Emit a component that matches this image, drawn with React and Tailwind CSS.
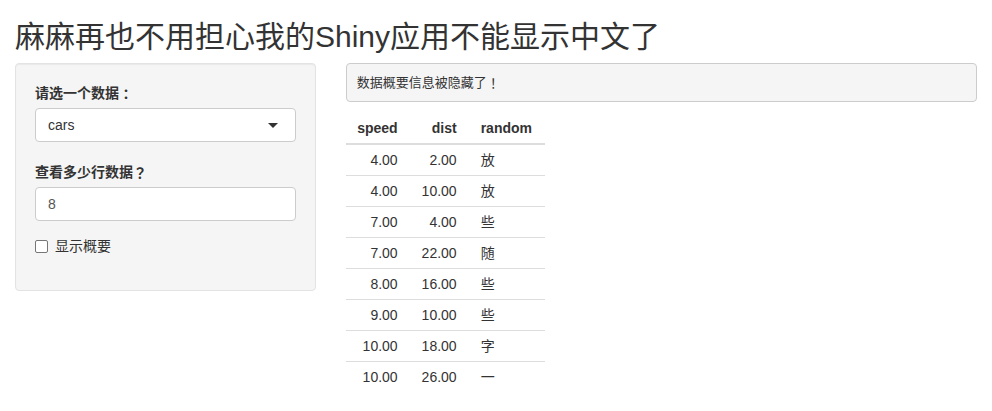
import React from "react";

const rows = [
  ["4.00", "2.00", "放"],
  ["4.00", "10.00", "放"],
  ["7.00", "4.00", "些"],
  ["7.00", "22.00", "随"],
  ["8.00", "16.00", "些"],
  ["9.00", "10.00", "些"],
  ["10.00", "18.00", "字"],
  ["10.00", "26.00", "一"],
];

const punct = { fontFamily: '"Noto Sans CJK JP", sans-serif' };

export default function App() {
  return (
    <div
      lang="zh-CN"
      className="w-[992px] h-[411px] bg-white text-[#333] px-[15px] overflow-hidden"
      style={{ fontFamily: '"Liberation Sans", "Noto Sans CJK SC", sans-serif' }}
    >
      <h2 className="mt-[20px] mb-[10px] text-[30px] leading-[33px] h-[33px] font-normal">
        麻麻再也不用担心我的Shiny应用不能显示中文了
      </h2>
      <div className="flex">
        <div className="w-[300.67px] shrink-0">
          <div className="bg-[#f5f5f5] border border-[#e3e3e3] rounded-[4px] p-[19px] shadow-[inset_0_1px_1px_rgba(0,0,0,0.05)]">
            <div className="mb-[20px]">
              <div className="text-[14px] leading-[20px] h-[20px] font-bold mb-[5px] flex items-center">
                <span>请选一个数据</span><span style={punct}>：</span>
              </div>
              <div className="h-[34px] bg-white border border-[#ccc] rounded-[4px] flex items-center justify-between pl-[12px] pr-[17px] text-[14px]">
                <span>cars</span>
                <span className="w-0 h-0 border-l-[5px] border-r-[5px] border-t-[5px] border-l-transparent border-r-transparent border-t-[#333]"></span>
              </div>
            </div>
            <div className="mb-[15px]">
              <div className="text-[14px] leading-[20px] h-[20px] font-bold mb-[5px] flex items-center">
                <span>查看多少行数据</span><span style={punct}>？</span>
              </div>
              <div className="h-[34px] bg-white border border-[#ccc] rounded-[4px] flex items-center pl-[12px] text-[14px] text-[#555]">
                8
              </div>
            </div>
            <div className="flex items-center h-[20px] mb-[15px] text-[14px]">
              <span className="w-[13px] h-[13px] border border-[#767676] rounded-[2px] bg-white mr-[7px]"></span>
              <span>显示概要</span>
            </div>
          </div>
        </div>
        <div className="ml-[30px] flex-1">
          <div className="h-[39px] bg-[#f5f5f5] border border-[#ccc] rounded-[4px] px-[10px] flex items-center text-[13px] text-[#333]">
            <span>数据概要信息被隐藏了</span><span style={punct}>！</span>
          </div>
          <table className="mt-[10px] text-[14px] leading-[20px] border-collapse">
            <thead>
              <tr className="border-b-2 border-[#ddd]">
                <th className="w-[60px] pt-[6px] pb-[5px] align-bottom text-right pr-[8px] font-bold">speed</th>
                <th className="w-[59px] pt-[6px] pb-[5px] align-bottom text-right pr-[8px] font-bold">dist</th>
                <th className="w-[80px] pt-[6px] pb-[5px] align-bottom text-left pl-[16px] font-bold">random</th>
              </tr>
            </thead>
            <tbody>
              {rows.map((r, i) => (
                <tr key={i} className={i === 0 ? "" : "border-t border-[#ddd]"}>
                  <td className="py-[5px] align-top text-right pr-[8px]">{r[0]}</td>
                  <td className="py-[5px] align-top text-right pr-[8px]">{r[1]}</td>
                  <td className="py-[5px] align-top text-left pl-[16px]">{r[2]}</td>
                </tr>
              ))}
            </tbody>
          </table>
        </div>
      </div>
    </div>
  );
}
